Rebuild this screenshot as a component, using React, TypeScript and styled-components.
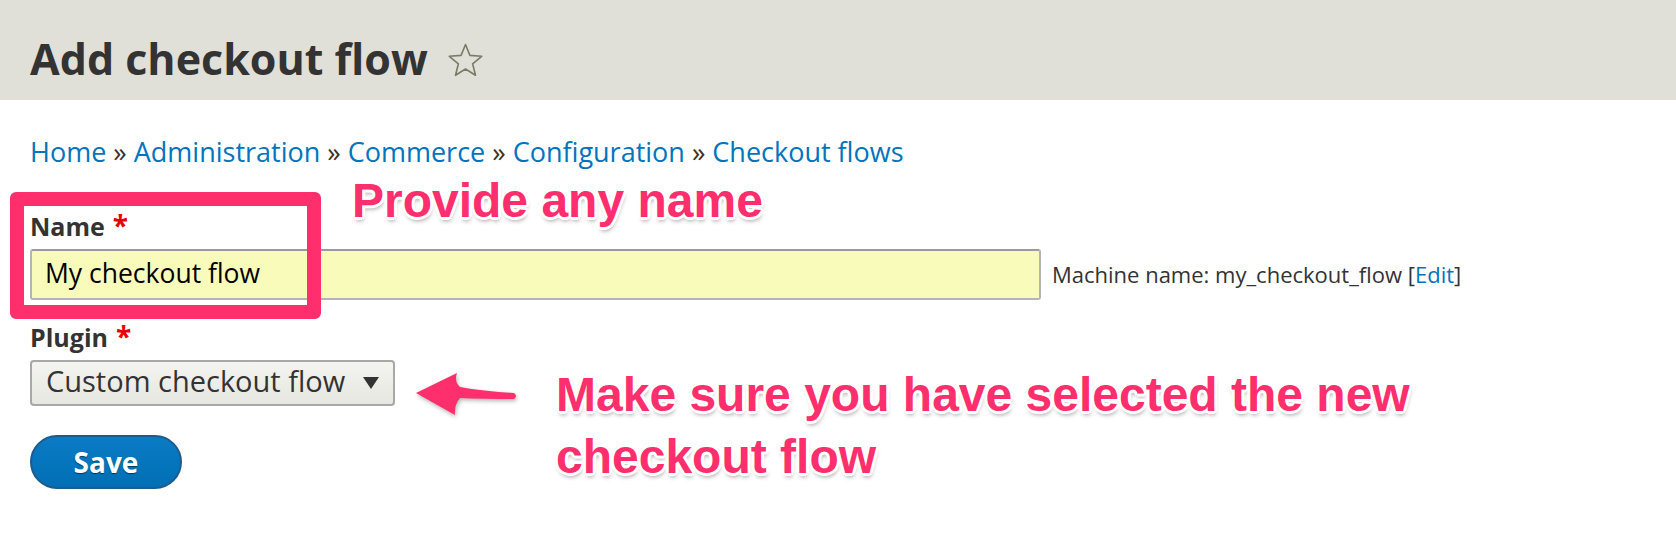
import styled, { createGlobalStyle } from "styled-components";

const GlobalStyle = createGlobalStyle`
  html, body {
    margin: 0;
    padding: 0;
    background: #fff;
  }
  body {
    font-family: "Open Sans", "DejaVu Sans", sans-serif;
    color: #333;
  }
`

const PINK = "#ff2f6e"

const Page = styled.div`
  position: relative;
  width: 1676px;
  min-height: 538px;
  overflow: hidden;
`
const Header = styled.header`
  height: 100px;
  box-sizing: border-box;
  padding: 37px 30px 0;
  background: #e0e0d8;
`
const Title = styled.h1`
  display: flex;
  align-items: center;
  margin: 0;
  font-size: 43px;
  line-height: 44px;
  font-weight: 700;
  color: #333;
`
const Star = styled.svg`
  margin: 3px 0 0 20px;
  width: 35px;
  height: 35px;
`
const Content = styled.main`
  padding: 34px 30px 0;
`
const Breadcrumb = styled.nav`
  font-size: 27px;
  line-height: 36px;
  color: #333;
`
const Crumb = styled.a`
  color: #0074bd;
  text-decoration: none;
`
const Sep = styled.span`
  color: #3a3226;
`
const Form = styled.form`
  margin-top: 40px;
`
const Field = styled.div<{ $gap?: number }>`
  margin-top: ${p => p.$gap ?? 0}px;
`
const Label = styled.label`
  display: block;
  margin-bottom: 8px;
  font-size: 25px;
  line-height: 30px;
  font-weight: 700;
  color: #333;
`
const Required = styled.span`
  margin-left: 8px;
  font-size: 28px;
  color: #e80000;
`
const InputRow = styled.div`
  display: flex;
  align-items: baseline;
  gap: 11px;
`
const TextInput = styled.input`
  width: 1011px;
  height: 51px;
  box-sizing: border-box;
  padding: 0 13px 3px;
  border: 2px solid #b4b4b4;
  border-top-color: #9a9a9a;
  border-radius: 3px;
  background: #f9fbbb;
  font-family: "Open Sans", "DejaVu Sans", sans-serif;
  font-size: 26.5px;
  color: #000;
  outline: none;
`
const MachineName = styled.span`
  font-size: 22px;
  color: #333;
`
const EditLink = styled.a`
  color: #0074bd;
  text-decoration: none;
`
const SelectBox = styled.div`
  display: flex;
  align-items: center;
  justify-content: space-between;
  width: 365px;
  height: 46px;
  box-sizing: border-box;
  padding: 0 14px 4px 14px;
  border: 2px solid #a8a8a8;
  border-radius: 4px;
  background: linear-gradient(#f4f4f0, #e7e7e1);
  font-size: 29px;
  line-height: 38px;
  color: #333;
`
const Caret = styled.span`
  width: 0;
  height: 0;
  margin-top: 4px;
  border-left: 8px solid transparent;
  border-right: 8px solid transparent;
  border-top: 12px solid #333;
`
const SaveButton = styled.button`
  width: 152px;
  height: 54px;
  margin-top: 29px;
  border: 2px solid #1d5b8f;
  border-radius: 28px;
  background: linear-gradient(#0a7bc4, #006fb5);
  font-family: "Open Sans", "DejaVu Sans", sans-serif;
  font-size: 28px;
  font-weight: 700;
  color: #fff;
  text-shadow: 0 1px 1px rgba(0, 0, 0, 0.5);
  cursor: pointer;
`

// annotation layer drawn over the form
const Highlight = styled.div`
  position: absolute;
  left: 10px;
  top: 192px;
  width: 311px;
  height: 127px;
  box-sizing: border-box;
  border: 14px solid ${PINK};
  border-radius: 6px;
`
const Callout = styled.div<{ $top: number; $left: number }>`
  position: absolute;
  top: ${p => p.$top}px;
  left: ${p => p.$left}px;
  font-family: "Liberation Sans", Arial, sans-serif;
  font-size: 48px;
  line-height: 62px;
  font-weight: 700;
  color: ${PINK};
  white-space: nowrap;
  text-shadow:
    -3px 0 0 #fff, 3px 0 0 #fff, 0 -3px 0 #fff, 0 3px 0 #fff,
    -2px -2px 0 #fff, 2px -2px 0 #fff, -2px 2px 0 #fff, 2px 2px 0 #fff,
    1px 4px 4px rgba(0, 0, 0, 0.35);
`
const Arrow = styled.svg`
  position: absolute;
  left: 410px;
  top: 368px;
  width: 115px;
  height: 55px;
  filter: drop-shadow(1px 2px 2px rgba(0, 0, 0, 0.3));
`

const crumbs = ["Home", "Administration", "Commerce", "Configuration", "Checkout flows"]

function App() {
  return (
    <Page>
      <GlobalStyle />
      <Header>
        <Title>
          Add checkout flow
          <Star viewBox="0 0 35 35">
            <polygon
              points="17.5,1.5 21.9,12.4 33.7,13.3 24.6,20.8 27.5,32.3 17.5,26 7.5,32.3 10.4,20.8 1.3,13.3 13.1,12.4"
              fill="none"
              stroke="#7e7a68"
              strokeWidth="1.6"
              strokeLinejoin="round"
            />
          </Star>
        </Title>
      </Header>
      <Content>
        <Breadcrumb>
          {crumbs.map((c, i) => (
            <span key={c}>
              {i > 0 && <Sep> » </Sep>}
              <Crumb href="#">{c}</Crumb>
            </span>
          ))}
        </Breadcrumb>
        <Form onSubmit={e => e.preventDefault()}>
          <Field>
            <Label>
              Name<Required>*</Required>
            </Label>
            <InputRow>
              <TextInput readOnly value="My checkout flow" />
              <MachineName>
                Machine name: my_checkout_flow [<EditLink href="#">Edit</EditLink>]
              </MachineName>
            </InputRow>
          </Field>
          <Field $gap={21}>
            <Label>
              Plugin<Required>*</Required>
            </Label>
            <SelectBox role="combobox">
              <span>Custom checkout flow</span>
              <Caret />
            </SelectBox>
          </Field>
          <SaveButton type="submit">Save</SaveButton>
        </Form>
      </Content>

      <Highlight />
      <Callout $top={170} $left={352}>Provide any name</Callout>
      <Arrow viewBox="0 0 115 55">
        <path
          d="M6 25 L47 5 Q44 14 50 19 Q72 23 104 25 Q108 28 104 31 Q72 31 50 30 Q44 37 45 47 Z"
          fill={PINK}
        />
      </Arrow>
      <Callout $top={364} $left={556}>
        Make sure you have selected the new
        <br />
        checkout flow
      </Callout>
    </Page>
  )
}

export default App
